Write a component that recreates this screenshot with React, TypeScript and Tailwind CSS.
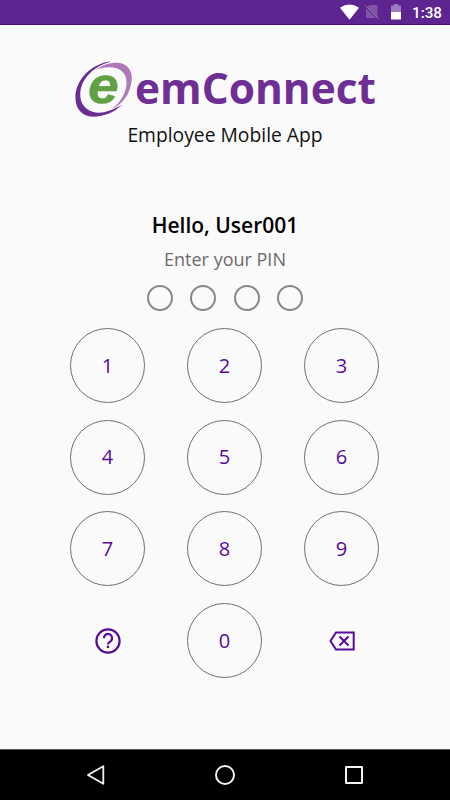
import React from "react";

const KEYS = ["1", "2", "3", "4", "5", "6", "7", "8", "9"];

function StatusBar() {
  return (
    <header className="flex h-[25px] shrink-0 items-center justify-end border-b border-[#4b0b80] bg-[#5e2590] pr-[9px] text-white">
      <svg className="mr-[6px] h-[16px] w-[19px]" viewBox="0 0 19 16" fill="currentColor">
        <path d="M0 3.7 Q9.5 -2.5 19 3.7 L9.5 15.8 Z" />
      </svg>
      <svg className="mr-[11px] h-[16px] w-[14px]" viewBox="0 0 14 16" fill="none">
        <path d="M4.5 1H12.5V14H1V4.5Z" fill="#8154a7" />
        <path d="M0.5 2.5L13 15.3" stroke="#5e2590" strokeWidth="1.2" />
        <path d="M0.5 1.5L13.5 14.8" stroke="#9b75ba" strokeWidth="1" />
      </svg>
      <svg className="mr-[10px] h-[16px] w-[12px]" viewBox="0 0 12 16">
        <path d="M4 0H8V1.5H11V8H1V1.5H4Z" fill="#9e7cbb" />
        <path d="M1 8H11V15.5H1Z" fill="#fff" />
      </svg>
      <span className="mt-[3px] w-[29px] whitespace-nowrap font-[Roboto,sans-serif] text-[15.2px] font-medium leading-none">1:38</span>
    </header>
  );
}

function Logo() {
  return (
    <svg className="h-[60px] w-[60px] overflow-visible" viewBox="0 0 60 60">
      <path d="M37.5 3.2C18 5.2 2 21 1.4 38.5C1 50.5 8 58.6 19 58.7C30 58.6 41 54 48 46.7C36.5 53.2 27 56.3 18.5 53.8C8.5 50.8 4.4 41.2 6.9 30.3C10 17.8 21.5 7.5 37.5 3.2Z" fill="#6a2d92" />
      <path d="M21.8 11.6C28 7.1 36 4.4 43.8 4.7C53.5 5.4 58.6 12.7 57.7 22C56.4 36 48.6 46.5 37.5 50.8C46.8 44.8 52.3 35 52.5 24.5C52.7 11.5 40.5 5.8 21.8 11.6Z" fill="#ad7ab7" />
      <text x="13.9" y="44.6" fill="#62a044" stroke="#62a044" strokeWidth="0.4" fontFamily="Liberation Sans, sans-serif" fontWeight="700" fontStyle="italic" fontSize="52" textLength="30.8" lengthAdjust="spacingAndGlyphs">e</text>
    </svg>
  );
}

function Key({ value }: { value: string }) {
  return (
    <button className="flex h-[75px] w-[75px] items-center justify-center rounded-full border border-[#707070] text-[20px] leading-none text-[#570b99]">
      {value}
    </button>
  );
}

export default function App() {
  return (
    <main className="flex h-[800px] w-[450px] flex-col overflow-hidden bg-[#fafafa] font-['Open_Sans',sans-serif]">
      <StatusBar />
      <div className="flex min-h-0 flex-1 flex-col">
        <div className="mt-[33px] flex h-[60px] pl-[74px]">
          <Logo />
          <h1 className="ml-[1px] whitespace-nowrap text-[42.4px] font-bold leading-[60px] text-[#6f2e94]">emConnect</h1>
        </div>
        <p className="mt-[4px] text-center text-[19.3px] leading-[26px] text-[#111]">Employee Mobile App</p>
        <h2 className="mt-[64px] text-center text-[21px] font-semibold leading-[26px] text-black">Hello, User001</h2>
        <p className="mt-[8px] text-center text-[18px] leading-[26px] text-[#6b6b6b]">Enter your PIN</p>
        <div className="mt-[13px] flex justify-center gap-[17.3px]">
          {[0, 1, 2, 3].map((n) => (
            <span key={n} className="h-[26px] w-[26px] rounded-full border-2 border-[#888]" />
          ))}
        </div>
        <div className="ml-[70px] mt-[17px] grid w-[309px] grid-cols-[repeat(3,75px)] gap-x-[42px] gap-y-[16.7px]">
          {KEYS.map((k) => (
            <Key key={k} value={k} />
          ))}
          <button aria-label="Help" className="flex items-center justify-center">
            <svg className="h-[26px] w-[26px]" viewBox="0 0 26 26" fill="none" stroke="#570b99">
              <circle cx="13" cy="13" r="11.6" strokeWidth="2.2" />
              <path d="M8.9 10.2A4.1 4.1 0 1 1 15.8 13.1C14.2 14.3 13 14.8 13 16.4" strokeWidth="2.2" />
              <path d="M13 17.7V20.1" strokeWidth="2.4" />
            </svg>
          </button>
          <Key value="0" />
          <button aria-label="Delete" className="flex items-center justify-center">
            <svg className="h-[20px] w-[26px]" viewBox="0 0 26 20" fill="none" stroke="#570b99" strokeWidth="2">
              <path d="M7 1.5H24.7V18.5H7L1.5 10Z" />
              <path d="M10.5 5.5L19.5 14.5M19.5 5.5L10.5 14.5" />
            </svg>
          </button>
        </div>
      </div>
      <nav className="flex h-[51px] shrink-0 items-center justify-between border-t border-[#555] bg-black pl-[86px] pr-[87px] text-[#f2f2f2]">
        <svg className="h-[20px] w-[19px]" viewBox="0 0 19 20" fill="none" stroke="currentColor" strokeWidth="1.8" strokeLinejoin="round">
          <path d="M2 10L17.3 1.2V18.8Z" />
        </svg>
        <span className="h-[20px] w-[20px] rounded-full border-2 border-[#f2f2f2]" />
        <span className="h-[18px] w-[18px] rounded-[1px] border-2 border-[#f2f2f2]" />
      </nav>
    </main>
  );
}
